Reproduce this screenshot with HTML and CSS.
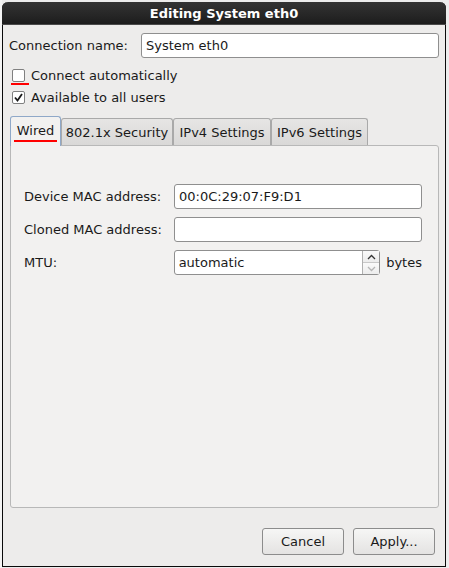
FILE: index.html
```html
<!DOCTYPE html>
<html>
<head>
<meta charset="utf-8">
<link rel="stylesheet" href="styles.css">
</head>
<body>
<div class="desktop">
  <div class="window">
    <div class="titlebar">Editing System eth0</div>
    <div class="content">
      <div class="name-row">
        <span class="label">Connection name:</span>
        <div class="entry name-entry">System eth0</div>
      </div>
      <div class="check-row">
        <span class="checkbox"></span>
        <span>Connect automatically</span>
        <span class="redline check-line"></span>
      </div>
      <div class="check-row">
        <span class="checkbox checked">
          <svg width="11" height="11" viewBox="0 0 11 11"><path d="M2 5.5 L4.5 8.5 L9 2" fill="none" stroke="#1a1a1a" stroke-width="1.8"/></svg>
        </span>
        <span>Available to all users</span>
      </div>
      <div class="notebook">
        <div class="tabs">
          <div class="tab active">Wired<span class="redline tab-line"></span></div>
          <div class="tab t-sec">802.1x Security</div>
          <div class="tab t-v4">IPv4 Settings</div>
          <div class="tab t-v6">IPv6 Settings</div>
        </div>
        <div class="panel">
          <div class="form-row">
            <span class="flabel">Device MAC address:</span>
            <div class="entry field">00:0C:29:07:F9:D1</div>
          </div>
          <div class="form-row">
            <span class="flabel">Cloned MAC address:</span>
            <div class="entry field"></div>
          </div>
          <div class="form-row">
            <span class="flabel">MTU:</span>
            <div class="spin">
              <div class="spin-text">automatic</div>
              <div class="spin-btns">
                <div class="sb up"><svg width="9" height="6" viewBox="0 0 9 6"><path d="M1 5 L4.5 1.5 L8 5" fill="none" stroke="#333" stroke-width="1.3"/></svg></div>
                <div class="sb down"><svg width="9" height="6" viewBox="0 0 9 6"><path d="M1 1 L4.5 4.5 L8 1" fill="none" stroke="#b5b5b5" stroke-width="1.3"/></svg></div>
              </div>
            </div>
            <span class="unit">bytes</span>
          </div>
        </div>
      </div>
      <div class="buttons">
        <button class="btn">Cancel</button>
        <button class="btn">Apply...</button>
      </div>
    </div>
  </div>
</div>
</body>
</html>
```
FILE: styles.css
```css
html, body {
  margin: 0;
  padding: 0;
  background: #ececec;
  font-family: "DejaVu Sans", "Liberation Sans", sans-serif;
  font-size: 13px;
  color: #1a1a1a;
}
.desktop {
  width: 449px;
  height: 568px;
  overflow: hidden;
  padding: 2px 0 0 2px;
  box-sizing: border-box;
  background: linear-gradient(to right, #f4f4f4 0, #f4f4f4 2px, #ececec 2px);
}
.window {
  width: 444px;
  height: 565px;
  box-sizing: border-box;
  border: 1px solid #0a0a0a;
  border-top: none;
  border-radius: 6px 6px 0 0;
  background: #edeceb;
  display: flex;
  flex-direction: column;
}
.titlebar {
  height: 23px;
  margin: 0 -1px;
  background: linear-gradient(#333333, #262626 60%, #1c1c1c);
  border-bottom: 1px solid #4a4a4a;
  border-radius: 6px 6px 0 0;
  color: #ffffff;
  font-weight: bold;
  font-size: 13px;
  display: flex;
  align-items: center;
  justify-content: center;
  padding-top: 1px;
  box-sizing: border-box;
}
.content {
  flex: 1;
  display: flex;
  flex-direction: column;
  padding: 8px 6px 0 6px;
}
.name-row {
  display: flex;
  align-items: center;
  height: 25px;
}
.label {
  width: 132px;
}
.entry {
  background: #ffffff;
  border: 1px solid #8f8f8f;
  border-radius: 3px;
  box-sizing: border-box;
  height: 25px;
  padding: 0 4px;
  display: flex;
  align-items: center;
}
.name-entry {
  flex: 1;
}
.check-row {
  position: relative;
  display: flex;
  align-items: center;
  height: 22px;
  padding-left: 3px;
}
.name-row + .check-row {
  margin-top: 6px;
}
.checkbox {
  width: 13px;
  height: 13px;
  box-sizing: border-box;
  border: 1px solid #808080;
  background: #ffffff;
  border-radius: 2px;
  margin-right: 6px;
  display: flex;
  align-items: center;
  justify-content: center;
}
.checkbox svg {
  display: block;
}
.redline {
  position: absolute;
  height: 2px;
  background: #ff0000;
}
.check-line {
  left: 2px;
  top: 19px;
  width: 18px;
}
.notebook {
  margin-top: 8px;
  margin-left: 1px;
  display: flex;
  flex-direction: column;
}
.tabs {
  display: flex;
  align-items: flex-end;
  height: 29px;
  position: relative;
  z-index: 1;
}
.tab {
  height: 27px;
  box-sizing: border-box;
  border: 1px solid #a9a9a9;
  border-bottom: none;
  border-radius: 3px 3px 0 0;
  background: linear-gradient(#e6e5e4, #d9d8d7);
  padding: 0;
  display: flex;
  align-items: center;
  justify-content: center;
  position: relative;
}
.t-sec { width: 112px; }
.t-v4 { width: 98px; }
.t-v6 { width: 97px; }
.tab.active {
  height: 30px;
  margin-bottom: -1px;
  background: #f2f1f0;
  border-color: #8fa8c8;
  padding: 0 0 2px 0;
  width: 51px;
}
.tab-line {
  left: 3px;
  right: 3px;
  bottom: 4px;
}
.panel {
  height: 363px;
  box-sizing: border-box;
  background: #f2f1f0;
  border: 1px solid #b8b8b8;
  border-radius: 0 3px 3px 3px;
  padding: 38px 16px 0 13px;
  display: flex;
  flex-direction: column;
  gap: 8px;
}
.form-row {
  display: flex;
  align-items: center;
  height: 25px;
}
.flabel {
  width: 150px;
}
.field {
  width: 248px;
}
.spin {
  width: 207px;
  height: 25px;
  box-sizing: border-box;
  background: #ffffff;
  border: 1px solid #8f8f8f;
  border-radius: 3px;
  display: flex;
}
.spin-text {
  flex: 1;
  display: flex;
  align-items: center;
  padding: 0 4px;
}
.spin-btns {
  width: 16px;
  display: flex;
  flex-direction: column;
  border-left: 1px solid #b0b0b0;
}
.sb {
  flex: 1;
  display: flex;
  align-items: center;
  justify-content: center;
  background: linear-gradient(#fafafa, #ececec);
}
.sb.up {
  border-bottom: 1px solid #c8c8c8;
}
.unit {
  margin-left: 6px;
}
.buttons {
  display: flex;
  justify-content: flex-end;
  gap: 9px;
  margin-top: 20px;
  padding-right: 4px;
}
.btn {
  width: 82px;
  height: 27px;
  font-family: "DejaVu Sans", "Liberation Sans", sans-serif;
  font-size: 13px;
  color: #1a1a1a;
  background: linear-gradient(#f6f6f5, #e4e3e2);
  border: 1px solid #8c8c8c;
  border-radius: 3px;
  padding: 0;
}
```
